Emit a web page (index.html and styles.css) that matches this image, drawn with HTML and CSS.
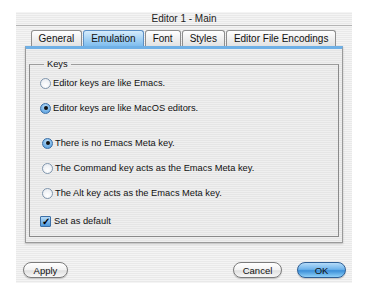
FILE: index.html
```html
<!DOCTYPE html>
<html lang="en">
<head>
    <meta charset="UTF-8">
    <meta name="viewport" content="width=device-width, initial-scale=1.0">
    <title>Editor 1 - Main</title>
    <link rel="stylesheet" href="styles.css">
</head>
<body>
    <div class="window">
        <div class="titlebar">Editor 1 - Main</div>
        <div class="tabs">
            <div class="tab">General</div>
            <div class="tab active">Emulation</div>
            <div class="tab">Font</div>
            <div class="tab">Styles</div>
            <div class="tab">Editor File Encodings</div>
        </div>
        <div class="panel">
            <fieldset class="group">
                <legend>Keys</legend>
                <div class="opts">
                    <div class="opt"><span class="radio"></span>Editor keys are like Emacs.</div>
                    <div class="opt"><span class="radio on"></span>Editor keys are like MacOS editors.</div>
                </div>
                <div class="opts meta">
                    <div class="opt"><span class="radio on"></span>There is no Emacs Meta key.</div>
                    <div class="opt"><span class="radio"></span>The Command key acts as the Emacs Meta key.</div>
                    <div class="opt"><span class="radio"></span>The Alt key acts as the Emacs Meta key.</div>
                </div>
                <div class="opt check-row"><span class="check">&#10003;</span>Set as default</div>
            </fieldset>
        </div>
        <div class="buttons">
            <button class="btn apply">Apply</button>
            <span class="spacer"></span>
            <button class="btn cancel">Cancel</button>
            <button class="btn ok">OK</button>
        </div>
    </div>
</body>
</html>
```

FILE: styles.css
```css
/* Aqua style dialog */
body {
    margin: 0;
    padding: 0;
    background: #fff;
    font-family: 'Liberation Sans', Arial, sans-serif;
    color: #111;
}

.window {
    margin: 12px 0 0 16px;
    width: 336px;
    height: 271px;
    background: repeating-linear-gradient(to bottom, #f4f4f4 0, #f4f4f4 1px, #e9e9e9 1px, #e9e9e9 2px);
}

.titlebar {
    height: 13px;
    line-height: 13px;
    text-align: center;
    font-size: 10px;
    color: #222;
    border-bottom: 1px solid #b4b4b4;
}

.tabs {
    display: flex;
    justify-content: center;
    margin-top: 4px;
    height: 16px;
}

.tab {
    padding: 0 7px;
    font-size: 10px;
    line-height: 16px;
    border: 1px solid #8e8e8e;
    border-bottom: none;
    border-radius: 3px 3px 0 0;
    background: linear-gradient(to bottom, #ffffff, #f0f0f0 50%, #e2e2e2);
    margin-right: 1px;
}

.tab.active {
    background: linear-gradient(to bottom, #d6ecfc, #a9d4f5 50%, #7fbdee);
    border-color: #5c8fc4;
}

.panel {
    margin: 0 9px;
    height: 197px;
    box-sizing: border-box;
    border: 1px solid #9a9a9a;
    border-top: 3px solid #6fb0e6;
    padding: 10px 3px 0;
    background: repeating-linear-gradient(to bottom, #efefef 0, #efefef 1px, #e5e5e5 1px, #e5e5e5 2px);
    box-shadow: 0 1px 2px rgba(0, 0, 0, 0.2);
}

.group {
    margin: 0;
    padding: 6px 0 8px 10px;
    border: 1px solid #8a8a8a;
    border-top-color: #9c9c9c;
    height: 178px;
    box-sizing: border-box;
    font-size: 9.3px;
}

.group legend {
    padding: 0 3px;
    margin-left: 4px;
    font-size: 9.3px;
    line-height: 11px;
}

.opts {
    display: flex;
    flex-direction: column;
    gap: 11px;
}

.opts.meta {
    margin-top: 21px;
    padding-left: 2px;
}

.opt {
    display: flex;
    align-items: center;
    height: 14px;
    white-space: nowrap;
}

.radio {
    width: 9px;
    height: 9px;
    border: 1px solid #8096ad;
    border-radius: 50%;
    background: radial-gradient(circle at 50% 70%, #ffffff, #e4e8ee);
    margin-right: 2px;
    box-sizing: content-box;
    display: flex;
    align-items: center;
    justify-content: center;
}

.radio.on {
    border-color: #3c6fa6;
    background: radial-gradient(circle at 50% 30%, #b8dcf8, #4b97db);
}

.radio.on::after {
    content: '';
    width: 4px;
    height: 4px;
    border-radius: 50%;
    background: #111;
}

.check-row {
    margin-top: 14px;
}

.check {
    width: 9px;
    height: 9px;
    border: 1px solid #3c6fa6;
    border-radius: 1px;
    background: linear-gradient(to bottom, #b8dcf8, #4b97db);
    font-size: 10px;
    line-height: 9px;
    font-weight: bold;
    text-align: center;
    color: #000;
    margin-right: 3px;
    overflow: visible;
}

.buttons {
    display: flex;
    align-items: center;
    margin-top: 19px;
    padding: 0 6px 0 7px;
}

.spacer {
    flex: 1;
}

.btn {
    height: 16px;
    padding: 0;
    font-family: 'Liberation Sans', Arial, sans-serif;
    font-size: 9.5px;
    color: #111;
    border: 1px solid #7b7b7b;
    border-radius: 8px;
    background: linear-gradient(to bottom, #ffffff, #f2f2f2 50%, #e0e0e0 55%, #f8f8f8);
    box-shadow: 0 1px 1px rgba(0, 0, 0, 0.2);
}

.apply {
    width: 45px;
}

.cancel {
    width: 49px;
    margin-right: 15px;
}

.ok {
    width: 49px;
    border-color: #2f5f95;
    background: linear-gradient(to bottom, #b5dbf8, #6fb4ec 45%, #3b8fd8 55%, #8fd0f8);
}
```
